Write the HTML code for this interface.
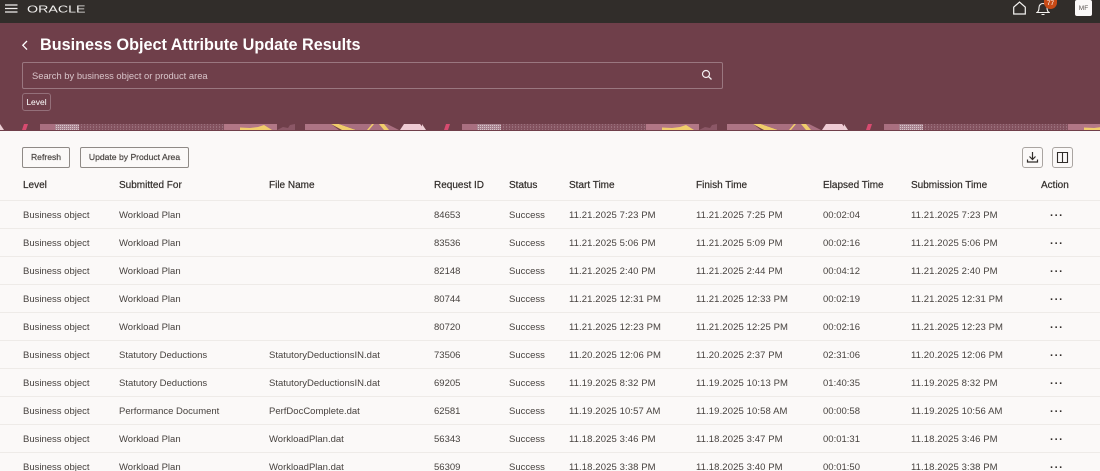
<!DOCTYPE html>
<html lang="en">
<head>
<meta charset="utf-8">
<title>Business Object Attribute Update Results</title>
<style>
html,body{margin:0;padding:0;width:1100px;height:471px;overflow:hidden}
body{background:#fbf9f8;font-family:"Liberation Sans",sans-serif;color:#312d2a}
#wrap{position:relative;width:1100px;height:471px;overflow:hidden;background:#fbf9f8}
.abs{position:absolute}
#top{left:0;top:0;width:1100px;height:23px;background:#312d2a}
#hero{left:0;top:23px;width:1100px;height:101px;background:#6f3f4a}
#title{left:40px;top:36px;font-size:16.2px;line-height:19px;font-weight:bold;color:#fff;white-space:nowrap}
#search{left:22px;top:62px;width:699px;height:25px;border:1px solid #9a7780;border-radius:2px;box-sizing:content-box}
#ph{left:32px;top:69px;font-size:9.4px;line-height:13px;color:#d9c6cb;white-space:nowrap}
#chip{left:22px;top:93px;width:29px;height:18px;border:1px solid #94707a;border-radius:3px;box-sizing:border-box;font-size:8.5px;line-height:16px;color:#fff;text-align:center}
.btn{top:147px;height:21px;box-sizing:border-box;border:1px solid #8f8a86;border-radius:2px;background:#fbf9f8;font-size:8.6px;line-height:19px;text-align:center;color:#4a4542;-webkit-text-stroke:.2px #4a4542;white-space:nowrap}
.ibtn{top:147px;width:21px;height:21px;box-sizing:border-box;border:1px solid #aaa5a1;border-radius:3px}
table{position:absolute;left:0;top:171px;width:1100px;border-collapse:collapse;table-layout:fixed;font-size:9.5px}
th{height:29px;padding:0;text-align:left;font-weight:normal;color:#312d2a;font-size:10px;-webkit-text-stroke:.2px #312d2a;white-space:nowrap}
td{height:25px;padding:2px 0 0;color:#47423f;white-space:nowrap}
td.t{letter-spacing:.1px}
tr{border-bottom:1px solid #eeebe8}
th:first-child,td:first-child{padding-left:23px}
.d{letter-spacing:.9px;font-weight:bold;font-size:11px;padding-left:9px;color:#312d2a}
</style>
</head>
<body>
<div id="wrap">
<div class="abs" id="top"></div>
<svg class="abs" style="left:4.5px;top:4px" width="13" height="10" viewBox="0 0 13 10"><path d="M0 1h12.500M0 4.500h12.500M0 8h12.500" stroke="#f1efed" stroke-width="1.200"/></svg>
<svg class="abs" style="left:27px;top:4px" width="60" height="10" viewBox="0 0 60 10">
<text x="0" y="8.300" font-family="'Liberation Sans',sans-serif" font-size="10" textLength="58.500" lengthAdjust="spacingAndGlyphs" fill="#f1efed">ORACLE</text></svg>
<svg class="abs" style="left:1012px;top:1px" width="15" height="14" viewBox="0 0 15 14"><path d="M1.700 13V6.200L7.500 1l5.800 5.200V13z" fill="none" stroke="#f4f2f0" stroke-width="1.200"/></svg>
<svg class="abs" style="left:1036px;top:1px" width="14" height="15" viewBox="0 0 14 15"><path d="M1 11.500c1.600-1 2-2.500 2-5 0-2.500 1.800-4 4-4s4 1.500 4 4c0 2.500.4 4 2 5zM5.500 13.500h3" fill="none" stroke="#f4f2f0" stroke-width="1.100"/></svg>
<div class="abs" style="left:1044px;top:0;width:13px;height:9px;background:#c74a16;border-radius:0 0 7px 7px;color:#fff;font-size:6.500px;line-height:7px;text-align:center">77</div>
<div class="abs" style="left:1075px;top:0;width:17px;height:16px;background:#fbf9f8;border-radius:2px;color:#5a5552;font-size:6.500px;line-height:17px;text-align:center">MF</div>

<div class="abs" id="hero"></div>
<svg class="abs" style="left:21px;top:40px" width="8" height="11" viewBox="0 0 8 11"><path d="M6 1L1.800 5.300 6 9.600" fill="none" stroke="#fff" stroke-width="1.300"/></svg>
<div class="abs" id="title">Business Object Attribute Update Results</div>
<div class="abs" id="search"></div>
<div class="abs" id="ph">Search by business object or product area</div>
<svg class="abs" style="left:701px;top:69px" width="12" height="12" viewBox="0 0 12 12"><circle cx="5" cy="5" r="3.500" fill="none" stroke="#f4eef0" stroke-width="1.200"/><path d="M7.600 7.600L10.500 10.500" stroke="#f4eef0" stroke-width="1.300"/></svg>
<div class="abs" id="chip">Level</div>

<svg class="abs" style="left:0;top:123px" width="1100" height="8" viewBox="0 0 1100 8">
<defs>
<pattern id="t" width="3" height="3" patternUnits="userSpaceOnUse"><rect width="3" height="3" fill="#83525f"/><rect width="1" height="2" fill="#996f7b"/></pattern>
<pattern id="w" width="2" height="2" patternUnits="userSpaceOnUse"><rect width="2" height="2" fill="#a98390"/><rect width="1" height="1" fill="#d8c6cb"/></pattern>
<g id="b">
<rect x="0" y="0" width="422" height="8" fill="#6f3f4a"/>
<path d="M0 1L4 7H0z" fill="#ecd0d6"/>
<path d="M24 1h4l-2 6h-4z" fill="#d84b70"/>
<rect x="40" y="1" width="15" height="6" fill="#a96f80"/>
<rect x="55" y="1" width="24" height="6" fill="url(#w)"/>
<rect x="79" y="1" width="145" height="6" fill="url(#t)"/>
<rect x="224" y="1" width="53" height="6" fill="#b27786"/>
<path d="M240 4.500l10 .5 8-1 6-2 8 5h-32z" fill="#f0cd6b"/>
<path d="M277 7l6-3 5 1 2-3 5-1v6z" fill="#8b5766"/>
<path d="M305 1h26l8 6h-34z" fill="#ad7484"/>
<path d="M331 1h8l17 6h-14z" fill="#f0cd6b"/>
<path d="M339 1h48l12 6h-43z" fill="#a96f80"/>
<path d="M372 1h2l-5 6h-2z" fill="#f0cd6b"/>
<path d="M379 1h5l5 6h-5z" fill="#f0cd6b"/>
<path d="M404 1l-4 6h25l-5-6z" fill="#efcbd4"/>
</g>
</defs>
<use href="#b" x="0"/><use href="#b" x="422"/><use href="#b" x="844"/>
</svg>

<div class="abs btn" style="left:22px;width:48px">Refresh</div>
<div class="abs btn" style="left:80px;width:109px">Update by Product Area</div>
<div class="abs ibtn" style="left:1022px"><svg width="19" height="19" viewBox="0 0 19 19" style="display:block"><path d="M9.500 4v7M6.500 8.500l3 3 3-3" fill="none" stroke="#312d2a" stroke-width="1.200"/><path d="M4.500 11.500v2.500h10v-2.500" fill="none" stroke="#312d2a" stroke-width="1.200"/></svg></div>
<div class="abs ibtn" style="left:1052px"><svg width="19" height="19" viewBox="0 0 19 19" style="display:block"><path d="M4.500 4.500h10v10h-10zM9.500 4.500v10" fill="none" stroke="#312d2a" stroke-width="1.100"/></svg></div>

<table>
<colgroup><col style="width:119px"><col style="width:150px"><col style="width:165px"><col style="width:75px"><col style="width:60px"><col style="width:127px"><col style="width:127px"><col style="width:88px"><col style="width:130px"><col style="width:59px"></colgroup>
<tr><th>Level</th><th>Submitted For</th><th>File Name</th><th>Request ID</th><th>Status</th><th>Start Time</th><th>Finish Time</th><th>Elapsed Time</th><th>Submission Time</th><th>Action</th></tr>
<tr><td>Business object</td><td>Workload Plan</td><td></td><td>84653</td><td>Success</td><td class="t">11.21.2025 7:23 PM</td><td class="t">11.21.2025 7:25 PM</td><td>00:02:04</td><td class="t">11.21.2025 7:23 PM</td><td class="d">···</td></tr>
<tr><td>Business object</td><td>Workload Plan</td><td></td><td>83536</td><td>Success</td><td class="t">11.21.2025 5:06 PM</td><td class="t">11.21.2025 5:09 PM</td><td>00:02:16</td><td class="t">11.21.2025 5:06 PM</td><td class="d">···</td></tr>
<tr><td>Business object</td><td>Workload Plan</td><td></td><td>82148</td><td>Success</td><td class="t">11.21.2025 2:40 PM</td><td class="t">11.21.2025 2:44 PM</td><td>00:04:12</td><td class="t">11.21.2025 2:40 PM</td><td class="d">···</td></tr>
<tr><td>Business object</td><td>Workload Plan</td><td></td><td>80744</td><td>Success</td><td class="t">11.21.2025 12:31 PM</td><td class="t">11.21.2025 12:33 PM</td><td>00:02:19</td><td class="t">11.21.2025 12:31 PM</td><td class="d">···</td></tr>
<tr><td>Business object</td><td>Workload Plan</td><td></td><td>80720</td><td>Success</td><td class="t">11.21.2025 12:23 PM</td><td class="t">11.21.2025 12:25 PM</td><td>00:02:16</td><td class="t">11.21.2025 12:23 PM</td><td class="d">···</td></tr>
<tr><td>Business object</td><td>Statutory Deductions</td><td>StatutoryDeductionsIN.dat</td><td>73506</td><td>Success</td><td class="t">11.20.2025 12:06 PM</td><td class="t">11.20.2025 2:37 PM</td><td>02:31:06</td><td class="t">11.20.2025 12:06 PM</td><td class="d">···</td></tr>
<tr><td>Business object</td><td>Statutory Deductions</td><td>StatutoryDeductionsIN.dat</td><td>69205</td><td>Success</td><td class="t">11.19.2025 8:32 PM</td><td class="t">11.19.2025 10:13 PM</td><td>01:40:35</td><td class="t">11.19.2025 8:32 PM</td><td class="d">···</td></tr>
<tr><td>Business object</td><td>Performance Document</td><td>PerfDocComplete.dat</td><td>62581</td><td>Success</td><td class="t">11.19.2025 10:57 AM</td><td class="t">11.19.2025 10:58 AM</td><td>00:00:58</td><td class="t">11.19.2025 10:56 AM</td><td class="d">···</td></tr>
<tr><td>Business object</td><td>Workload Plan</td><td>WorkloadPlan.dat</td><td>56343</td><td>Success</td><td class="t">11.18.2025 3:46 PM</td><td class="t">11.18.2025 3:47 PM</td><td>00:01:31</td><td class="t">11.18.2025 3:46 PM</td><td class="d">···</td></tr>
<tr><td>Business object</td><td>Workload Plan</td><td>WorkloadPlan.dat</td><td>56309</td><td>Success</td><td class="t">11.18.2025 3:38 PM</td><td class="t">11.18.2025 3:40 PM</td><td>00:01:50</td><td class="t">11.18.2025 3:38 PM</td><td class="d">···</td></tr>
</table>
</div>
</body>
</html>
